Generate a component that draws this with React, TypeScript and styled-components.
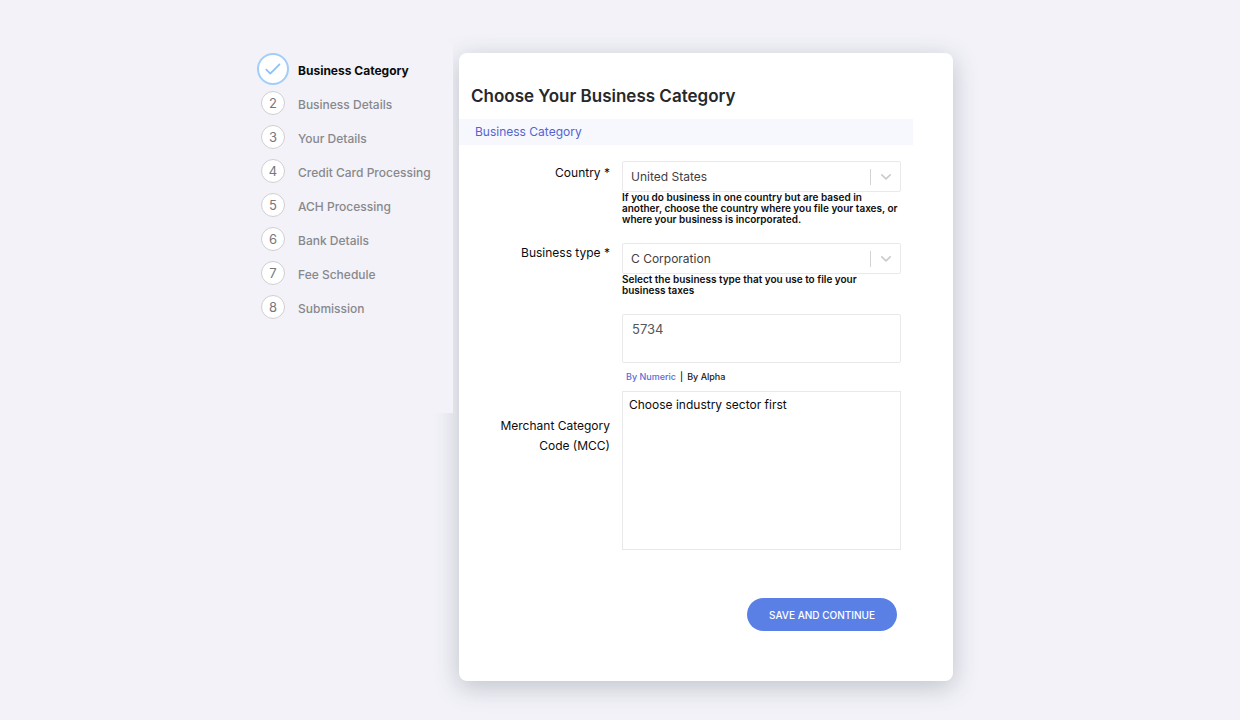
import React from "react";
import styled, { createGlobalStyle } from "styled-components";

const GlobalStyle = createGlobalStyle`
  *, *::before, *::after { box-sizing: border-box; }
  html { min-height: 100%; background: #f2f2f8; }
  body {
    margin: 0;
    background: #f2f2f8;
    color: #0c0c0d;
    font-family: Inter, "Liberation Sans", sans-serif;
    font-size: 12px;
    font-weight: 400;
    line-height: 20px;
  }
  button, select, textarea { font: inherit; color: inherit; }
`;

const Page = styled.div`
  display: grid;
  grid-template-columns: 216px minmax(0, 1fr);
  column-gap: 6px;
  align-items: start;
  max-width: 766px;
  margin: 0 auto;
  padding: 43px 50px 39px 0;
`;

const Sidebar = styled.nav`
  position: relative;
  z-index: 1;
  min-height: 370px;
  padding: 9px 0 0 20px;
  background: #f2f2f8;
`;

const StepList = styled.ol`
  margin: 0;
  padding: 0;
  list-style: none;
`;

const Step = styled.li`
  display: flex;
  align-items: center;
  gap: 9px;
  height: 34px;
`;

const MarkerSlot = styled.span`
  display: flex;
  justify-content: center;
  width: 32px;
`;

const Marker = styled.span<{ $done?: boolean }>`
  display: flex;
  align-items: center;
  justify-content: center;
  flex: none;
  width: ${(p) => (p.$done ? 32 : 24)}px;
  height: ${(p) => (p.$done ? 32 : 24)}px;
  border: ${(p) => (p.$done ? "2px solid #a3cdf8" : "1px solid #cfcfd1")};
  border-radius: 50%;
  background: #fff;
  color: #77777a;
  font-size: 13px;
`;

const StepLink = styled.a<{ $active?: boolean }>`
  padding-top: 4px;
  color: ${(p) => (p.$active ? "#0b0b0c" : "#88888c")};
  font-weight: ${(p) => (p.$active ? 700 : 500)};
  text-decoration: none;
  white-space: nowrap;
`;

const Card = styled.main`
  min-height: 628px;
  margin-top: 10px;
  border-radius: 8px;
  background: #fff;
  box-shadow: 0 6px 24px rgba(60, 75, 90, 0.28);
`;

const Title = styled.h1`
  margin: 0;
  padding: 31px 12px 11px;
  color: #26282b;
  font-size: 17px;
  font-weight: 600;
  line-height: 24px;
`;

const SectionBar = styled.h2`
  margin: 0 40px 16px 0;
  padding: 3px 16px;
  background: #f6f8fe;
  color: #5464cf;
  font-size: 12px;
  font-weight: 400;
  line-height: 20px;
`;

const Form = styled.form`
  padding-right: 52px;
`;

const Row = styled.div<{ $gap?: number }>`
  display: grid;
  grid-template-columns: 151px minmax(0, 1fr);
  column-gap: 12px;
  margin-bottom: ${(p) => p.$gap ?? 0}px;
`;

const Label = styled.label<{ $drop?: number }>`
  padding-top: ${(p) => p.$drop ?? 2}px;
  padding-left: 24px;
  text-align: right;
`;

const Control = styled.div`
  grid-column: 2;
`;

const SelectBox = styled.div`
  display: grid;
  grid-template-columns: minmax(0, 1fr) 30px;
  align-items: center;
  height: 31px;
  border: 1px solid #e9e9eb;
  border-radius: 2px;
`;

const Select = styled.select`
  grid-area: 1 / 1 / 2 / 3;
  width: 100%;
  height: 29px;
  padding: 0 38px 0 8px;
  border: 0;
  background: transparent;
  color: #3f4043;
  appearance: none;
`;

const Indicator = styled.span`
  grid-area: 1 / 2;
  display: flex;
  align-items: center;
  justify-content: center;
  height: 16px;
  border-left: 1px solid #d4d4d6;
  color: #cbcbce;
  pointer-events: none;
`;

const Hint = styled.p`
  margin: 0;
  color: #0d0d0e;
  font-size: 10px;
  font-weight: 600;
  line-height: 11px;
`;

const SearchField = styled.textarea`
  display: block;
  width: 100%;
  height: 49px;
  padding: 4px 9px;
  border: 1px solid #e9e9eb;
  border-radius: 2px;
  background: #fff;
  color: #55575a;
  font-size: 13px;
  resize: none;
`;

const SortLinks = styled.div`
  display: flex;
  align-items: center;
  gap: 4px;
  height: 28px;
  padding-left: 4px;
  font-size: 9px;
  font-weight: 500;
`;

const SortLink = styled.a<{ $current?: boolean }>`
  color: ${(p) => (p.$current ? "#5a6cd6" : "#161616")};
  text-decoration: none;
`;

const CodeList = styled.select`
  display: block;
  width: 100%;
  height: 159px;
  padding: 5px 4px;
  border: 1px solid #e9e9eb;
  border-radius: 0;
  background: #fff;
  overflow: hidden;
  appearance: none;

  option {
    min-height: 20px;
    padding: 0 2px;
  }
`;

const Actions = styled.div`
  display: flex;
  justify-content: flex-end;
  padding: 48px 4px 0 0;
`;

const SubmitButton = styled.button`
  height: 33px;
  padding: 0 22px;
  border: 0;
  border-radius: 17px;
  background: #5b80e5;
  color: #fff;
  font-size: 10px;
  font-weight: 500;
`;

const steps = [
  "Business Category",
  "Business Details",
  "Your Details",
  "Credit Card Processing",
  "ACH Processing",
  "Bank Details",
  "Fee Schedule",
  "Submission",
];

function Dropdown({ id, value }: { id: string; value: string }) {
  return (
    <SelectBox>
      <Select id={id} defaultValue={value}>
        <option>{value}</option>
      </Select>
      <Indicator>
        <svg width="12" height="8" viewBox="0 0 12 8" fill="none" stroke="currentColor" strokeWidth="1.6" strokeLinecap="round" strokeLinejoin="round" aria-hidden="true">
          <path d="M1.8 1.8 6 5.8l4.2-4" />
        </svg>
      </Indicator>
    </SelectBox>
  );
}

export default function App() {
  return (
    <>
      <GlobalStyle />
      <Page>
        <Sidebar aria-label="Application steps">
          <StepList>
            {steps.map((name, i) => (
              <Step key={name}>
                <MarkerSlot>
                  <Marker $done={i === 0}>
                    {i === 0 ? (
                      <svg width="18" height="14" viewBox="0 0 18 14" fill="none" stroke="#8bc0f5" strokeWidth="1.7" strokeLinecap="round" strokeLinejoin="round" aria-hidden="true">
                        <path d="m2.3 7.6 4 4L15.5 2.3" />
                      </svg>
                    ) : (
                      i + 1
                    )}
                  </Marker>
                </MarkerSlot>
                <StepLink href="#" $active={i === 0}>{name}</StepLink>
              </Step>
            ))}
          </StepList>
        </Sidebar>
        <Card>
          <Title>Choose Your Business Category</Title>
          <SectionBar>Business Category</SectionBar>
          <Form onSubmit={(e) => e.preventDefault()}>
            <Row $gap={18}>
              <Label htmlFor="country">Country *</Label>
              <Control>
                <Dropdown id="country" value="United States" />
                <Hint>
                  If you do business in one country but are based in another, choose the country where you file your taxes, or where your business is incorporated.
                </Hint>
              </Control>
            </Row>
            <Row $gap={18}>
              <Label htmlFor="business-type" $drop={0}>Business type *</Label>
              <Control>
                <Dropdown id="business-type" value="C Corporation" />
                <Hint>Select the business type that you use to file your business taxes</Hint>
              </Control>
            </Row>
            <Row>
              <Control>
                <SearchField aria-label="Merchant category search" defaultValue="5734" />
                <SortLinks>
                  <SortLink href="#" $current>By Numeric</SortLink>
                  <span>|</span>
                  <SortLink href="#">By Alpha</SortLink>
                </SortLinks>
              </Control>
            </Row>
            <Row>
              <Label htmlFor="mcc" $drop={25}>Merchant Category Code (MCC)</Label>
              <Control>
                <CodeList id="mcc" size={7}>
                  <option>Choose industry sector first</option>
                </CodeList>
              </Control>
            </Row>
            <Actions>
              <SubmitButton type="submit">SAVE AND CONTINUE</SubmitButton>
            </Actions>
          </Form>
        </Card>
      </Page>
    </>
  );
}
